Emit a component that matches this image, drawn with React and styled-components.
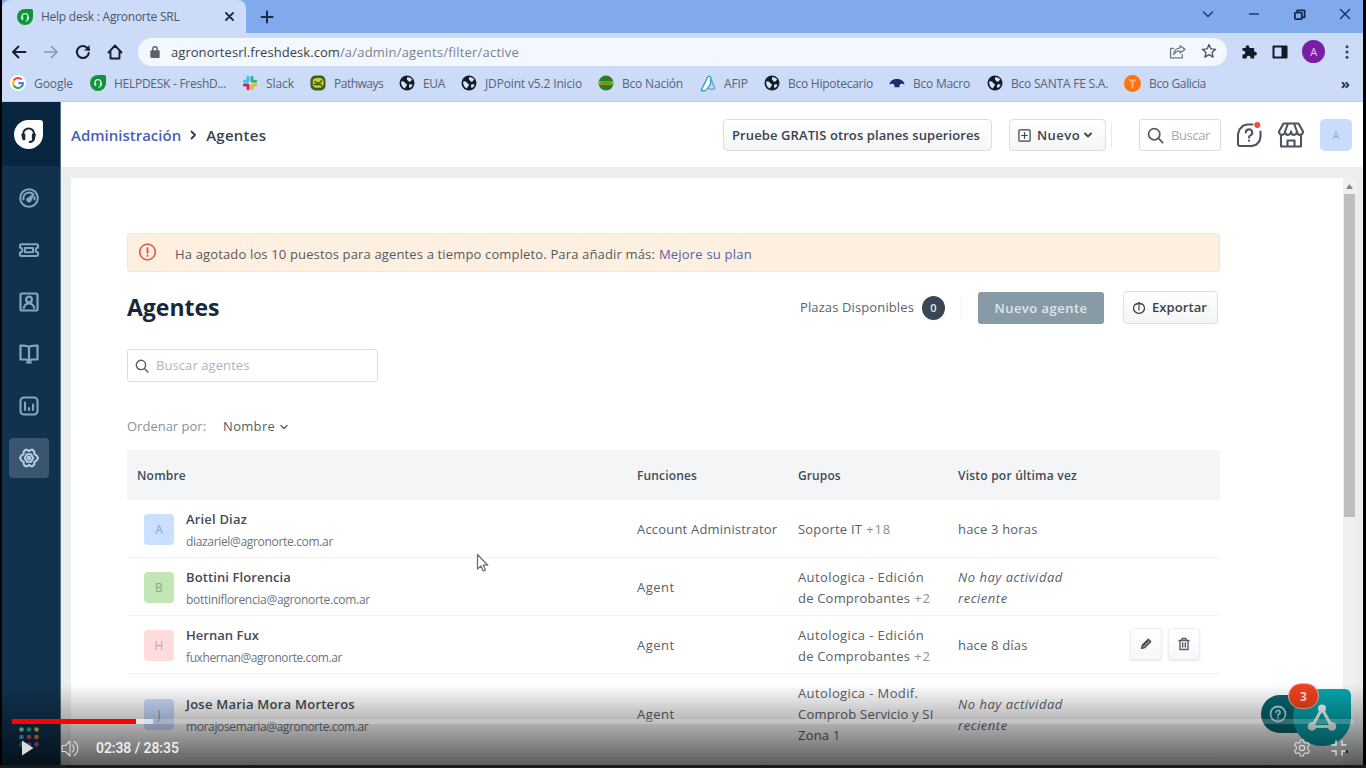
import React from 'react';
import styled, { createGlobalStyle } from 'styled-components';

const GlobalStyle = createGlobalStyle`
  * { box-sizing: border-box; }
  body { margin: 0; background: #000; overflow: hidden; }
  svg { display: block; flex: none; }
`;

const Frame = styled.div`
  position: relative;
  width: 1366px;
  height: 768px;
  padding: 0 3px 3px 2px;
  background: #000;
  overflow: hidden;
  font-family: 'Open Sans', 'Noto Sans', sans-serif;
  color: #3b444d;
`;

const Screen = styled.div`
  display: flex;
  flex-direction: column;
  height: 765px;
  overflow: hidden;
  background: #fff;
`;

const Text = styled.span`
  white-space: nowrap;
  font-size: ${(p) => p.$size || 13}px;
  font-weight: ${(p) => p.$weight || 400};
  font-style: ${(p) => (p.$italic ? 'italic' : 'normal')};
  letter-spacing: ${(p) => p.$ls || 0}px;
  color: ${(p) => p.$color || 'inherit'};
  line-height: ${(p) => p.$lh || 21}px;
`;

/* Browser chrome */
const TabStrip = styled.div`
  display: flex;
  height: 33px;
  background: #80a9ee;
`;
const Tab = styled.div`
  display: flex;
  align-items: center;
  width: 244px;
  padding: 0 12px 0 15px;
  border-radius: 8px 8px 0 0;
  background: #ccdbf7;
`;
const TabLabel = styled(Text)`
  flex: 1;
  margin-left: 8px;
`;
const NewTab = styled.div`
  display: flex;
  align-items: center;
  margin-left: 14px;
  flex: 1;
`;
const WindowButtons = styled.div`
  display: flex;
  align-items: center;
  gap: 33px;
  height: 28px;
  padding-right: 12px;
`;
const Toolbar = styled.div`
  display: flex;
  align-items: center;
  height: 37px;
  padding: 0 9px 0 9px;
  background: #ccdbf7;
`;
const NavIcons = styled.div`
  display: flex;
  gap: 16px;
  width: 127px;
`;
const AddressBar = styled.div`
  display: flex;
  align-items: center;
  width: 1089px;
  height: 28px;
  padding: 0 10px 0 12px;
  border-radius: 14px;
  background: #f3f7fe;
`;
const Url = styled.div`
  flex: 1;
  margin: 1px 0 0 11px;
  display: flex;
`;
const AddressActions = styled.div`
  display: flex;
  gap: 15px;
`;
const ToolbarActions = styled.div`
  display: flex;
  align-items: center;
  flex: 1;
  justify-content: space-between;
  margin-left: 14px;
`;
const Profile = styled.div`
  display: grid;
  place-items: center;
  width: 23px;
  height: 23px;
  border-radius: 50%;
  background: #7b1fa2;
`;
const Bookmarks = styled.div`
  display: flex;
  align-items: center;
  height: 32px;
  padding: 0 13px 5px 8px;
  background: #ccdbf7;
  border-bottom: 1px solid #b9cbe9;
`;
const Bookmark = styled.div`
  display: flex;
  align-items: center;
  gap: 8px;
  flex: none;
  width: ${(p) => p.$w}px;
`;
const MoreBookmarks = styled(Text)`
  margin-left: auto;
`;

/* Helpdesk application */
const AppBody = styled.div`
  display: flex;
  flex: 1;
  min-height: 0;
`;
const Sidebar = styled.nav`
  display: flex;
  flex-direction: column;
  flex: none;
  width: 59px;
  background: #10324f;
  border-right: 1px solid #5b7186;
`;
const Brand = styled.div`
  display: flex;
  align-items: center;
  height: 64px;
  padding-left: 12px;
  background: #08263f;
`;
const SideItem = styled.div`
  display: grid;
  place-items: center;
  width: 40px;
  height: 40px;
  margin: 12px 0 0 7px;
  padding-right: 1px;
  border-radius: 4px;
  color: ${(p) => (p.$active ? '#bcd0e4' : '#86a5c1')};
  background: ${(p) => (p.$active ? '#3a5570' : 'transparent')};
`;
const AppsGrid = styled.div`
  margin: auto 0 18px 17px;
`;
const Main = styled.div`
  display: flex;
  flex-direction: column;
  flex: 1;
  min-width: 0;
`;
const PageHeader = styled.header`
  display: flex;
  align-items: center;
  height: 65px;
  padding: 1px 11px 0 10px;
  background: #fff;
`;
const Breadcrumb = styled.div`
  display: flex;
  align-items: center;
  flex: 1;
`;
const Chevron = styled.div`
  width: 25px;
  display: grid;
  place-items: center;
`;
const Button = styled.div`
  display: flex;
  align-items: center;
  flex: none;
  height: ${(p) => p.$h}px;
  width: ${(p) => p.$w}px;
  margin-left: ${(p) => p.$ml || 0}px;
  padding: 0 8px;
  border: 1px solid #dcdee1;
  border-radius: 4px;
  background: linear-gradient(#fff, #f4f5f6);
  color: #39434c;
`;
const ButtonLabel = styled(Text)`
  margin: 0 4px 0 6px;
`;
const Divider = styled.div`
  width: 1px;
  height: 26px;
  margin: 0 ${(p) => p.$mr}px 0 ${(p) => p.$ml}px;
  background: ${(p) => p.$color || '#e6e8ea'};
`;
const SearchBox = styled.div`
  display: flex;
  align-items: center;
  gap: 7px;
  width: ${(p) => p.$w}px;
  height: ${(p) => p.$h}px;
  padding: 0 7px;
  border: 1px solid #dcdde3;
  border-radius: 3px;
  background: #fff;
`;
const HeaderIcons = styled.div`
  display: flex;
  align-items: center;
  gap: 16px;
  margin-left: 15px;
`;
const UserBadge = styled.div`
  display: grid;
  place-items: center;
  width: 32px;
  height: 32px;
  border-radius: 5px;
  background: #c9dcfd;
`;
const Workspace = styled.div`
  display: flex;
  flex: 1;
  min-height: 0;
  padding: 11px 6px 0 10px;
  background: #eceeee;
`;
const Card = styled.section`
  width: 1272px;
  flex: none;
  padding: 55px 123px 0 56px;
  background: #fff;
`;
const Scrollbar = styled.div`
  display: flex;
  flex-direction: column;
  align-items: center;
  width: 13px;
  padding-top: 6px;
  background: #eef0f1;
`;
const ScrollThumb = styled.div`
  width: 11px;
  height: 323px;
  margin-top: 5px;
  background: #bdbec0;
`;
const Alert = styled.div`
  display: flex;
  align-items: center;
  height: 39px;
  padding: 0 10px;
  border: 1px solid #fbe3cc;
  border-radius: 3px;
  background: #fef0e1;
`;
const AlertText = styled.div`
  display: flex;
  gap: 4px;
  margin: 3px 0 0 18px;
`;
const TitleRow = styled.div`
  display: flex;
  align-items: center;
  margin-top: 19px;
  height: 33px;
  padding-right: 2px;
`;
const Title = styled.h1`
  flex: 1;
  margin: -2px 0 0;
  font-size: 23px;
  line-height: 32px;
  font-weight: 700;
  letter-spacing: -0.02px;
  color: #17293a;
`;
const Count = styled.div`
  display: grid;
  place-items: center;
  width: 23px;
  height: 24px;
  margin-left: 8px;
  border-radius: 50%;
  background: #394654;
`;
const PrimaryButton = styled.div`
  display: grid;
  place-items: center;
  width: 126px;
  height: 32px;
  margin-right: 19px;
  padding-top: 2px;
  border-radius: 3px;
  background: #899aa7;
`;
const SearchRow = styled.div`
  margin-top: 25px;
`;
const SortRow = styled.div`
  display: flex;
  align-items: center;
  height: 21px;
  margin: 34px 0 13px;
`;
const SortValue = styled.div`
  display: flex;
  align-items: center;
  gap: 5px;
  margin-left: 17px;
`;
const columns = '500px 161px 160px 172px 1fr';
const TableHead = styled.div`
  display: grid;
  grid-template-columns: ${columns};
  align-items: center;
  height: 50px;
  padding-left: 10px;
  background: #f4f5f7;
  color: #424b55;
`;
const TableRow = styled.div`
  display: grid;
  grid-template-columns: ${columns};
  align-items: center;
  height: ${(p) => p.$h}px;
  padding: 2px 0 0 10px;
  border-bottom: 1px solid #f1f3f4;
`;
const AgentCell = styled.div`
  display: flex;
  align-items: center;
  gap: 12px;
  padding-left: 7px;
`;
const Avatar = styled.div`
  display: grid;
  place-items: center;
  width: 30px;
  height: 31px;
  border-radius: 4px;
  background: ${(p) => p.$bg};
  color: ${(p) => p.$fg};
`;
const Stack = styled.div`
  display: flex;
  flex-direction: column;
`;
const Email = styled(Text)`
  padding-top: 1px;
  margin-bottom: -1px;
`;
const RowActions = styled.div`
  display: flex;
  gap: 6px;
  margin-top: -3px;
`;
const ActionButton = styled.div`
  display: grid;
  place-items: center;
  width: 32px;
  height: 32px;
  border: 1px solid #eceef1;
  border-radius: 3px;
  background: linear-gradient(#fff, #f6f7f8);
  box-shadow: 0 1px 2px rgba(30, 40, 60, 0.12);
`;

/* Floating widgets and player */
const Pointer = styled.div`
  position: absolute;
  left: 476px;
  top: 553px;
`;
const HelpPill = styled.div`
  position: absolute;
  left: 1261px;
  top: 695px;
  width: 56px;
  height: 38px;
  padding: 10px 0 0 8px;
  border-radius: 19px;
  background: #04666d;
`;
const ChatBubble = styled.div`
  position: absolute;
  left: 1293px;
  top: 689px;
  display: grid;
  place-items: center;
  width: 58px;
  height: 57px;
  border-radius: 29px 6px 29px 29px;
  background: #05a5ad;
`;
const Unread = styled.div`
  position: absolute;
  left: 1288px;
  top: 683px;
  display: grid;
  place-items: center;
  width: 31px;
  height: 26px;
  border: 1px solid #ffb59f;
  border-radius: 13px;
  background: #f0431f;
`;
const Player = styled.div`
  position: absolute;
  left: 0;
  right: 0;
  bottom: 0;
  height: 84px;
  padding: 35px 12px 0;
  background: linear-gradient(transparent, rgba(0, 0, 0, 0.64) 81px, rgba(28, 28, 28, 1) 81px);
`;
const Track = styled.div`
  display: flex;
  height: 5px;
  background: rgba(255, 255, 255, 0.2);
`;
const Played = styled.div`
  width: 124px;
  background: #f00;
`;
const Loaded = styled.div`
  width: 17px;
  background: rgba(255, 255, 255, 0.6);
`;
const Controls = styled.div`
  display: flex;
  align-items: center;
  height: 24px;
  margin-top: 12px;
  padding: 0 6px 0 9px;
`;
const PlayControls = styled.div`
  display: flex;
  align-items: center;
  gap: 27px;
`;
const ViewControls = styled.div`
  display: flex;
  align-items: center;
  gap: 19px;
`;
const Time = styled.div`
  flex: 1;
  margin: -1px 0 0 16px;
  font: 500 14px/20px Roboto, sans-serif;
  letter-spacing: -0.05px;
  color: #f1f1f1;
`;

const Svg = ({ w = 16, h = w, vb = '0 0 16 16', sw = 1.5, children, fill = 'none', stroke = 'currentColor' }) => (
  <svg width={w} height={h} viewBox={vb} fill={fill} stroke={stroke} strokeWidth={sw} strokeLinecap="round" strokeLinejoin="round">
    {children}
  </svg>
);

const FreshIcon = ({ size = 16, bg = '#12933a', fg = '#d9f3df' }) => (
  <Svg w={size} vb="0 0 28 28" stroke={fg} sw={1.900}>
    <path d="M14 0H25a3 3 0 0 1 3 3V14A14 14 0 1 1 14 0Z" fill={bg} stroke="none" />
    <path d="M8.800 15v-1.600a5.300 5.300 0 0 1 10.600 0V15M19.300 18c-.5 2-2 3-4 3.300" />
    <path d="M8 14h2v4.500H9zM20.200 14h-2v4.500h1z" fill={fg} />
  </Svg>
);
const GlobeIcon = () => (
  <Svg stroke="none">
    <circle cx="8" cy="8" r="7.500" fill="#131c28" />
    <path d="M2.300 6.500c1.500-.8 3.200.2 3.800 1.500.5 1 2 .5 1.800 2-.2 1.200-1.300 1-1.500 2.500l-.4 1C3.500 12.500 1.800 9.500 2.300 6.500ZM8 2.500c2.200-.6 4.300.6 5.200 2.300-1.200.5-1.500 2-2.800 1.900C9 6.600 9.200 5.200 8 4.800ZM10.500 9.500c1.200-.6 2.200-.2 3.200.3-.6 1.600-1.700 2.700-3 3.200-.8-1-1-2.600-.2-3.500Z" fill="#d7e3f6" />
  </Svg>
);
const GoogleIcon = () => (
  <Svg sw={2.200}>
    <circle cx="8" cy="8" r="8" fill="#fff" stroke="none" />
    <g strokeLinecap="butt">
      <path d="M11.700 4.600A5 5 0 0 0 3.700 5.500" stroke="#ea4335" />
      <path d="M3.700 5.500a5 5 0 0 0 0 5" stroke="#fbbc05" />
      <path d="M3.700 10.500a5 5 0 0 0 7.500 1.400" stroke="#34a853" />
      <path d="M11.200 11.900A5 5 0 0 0 13 8.200H8.300" stroke="#4285f4" />
    </g>
  </Svg>
);
const SlackIcon = () => (
  <Svg sw={3}>
    <path d="M6 2.200V6M2.300 6.200H5" stroke="#36c5f0" />
    <path d="M10 2.300V6M13.700 6.300H11" stroke="#2eb67d" />
    <path d="M6 10v3.700M2.300 10H5" stroke="#e01e5a" />
    <path d="M10 10.500v3.200M13.700 10H11" stroke="#ecb22e" />
  </Svg>
);
const PathwaysIcon = () => (
  <Svg sw={1.400}>
    <rect x=".5" y=".5" width="15" height="15" rx="5" fill="#31601f" stroke="none" />
    <path d="M3 4.500 6 3h5l2.500 2v5L11 12.800H5L2.700 10.500Z" fill="#d9c526" stroke="none" />
    <path d="M4 9.500h6.500L12 11M5 6.500l2 1.500 3.500-.5 1-2" stroke="#31601f" />
  </Svg>
);
const NacionIcon = () => (
  <Svg stroke="none">
    <circle cx="8" cy="8" r="7.500" fill="#2b7a25" />
    <path d="M.5 6.300h15v3.400H.5z" fill="#a3b32b" />
    <path d="M3 8h10" stroke="#2b7a25" strokeWidth="1.200" />
  </Svg>
);
const AfipIcon = () => (
  <Svg w={17} h={17} sw={1.300}>
    <path d="M2 14.500 8 2.300c.8-1.400 2.800-1.300 3.300.3l-.6 6.200-3 4.200c-1.200 1.700-3.700 2.400-5.700 1.500Z" fill="#fff" stroke="#3d9bd0" />
    <path d="m11.300 4 3.500 8.500c-1.400 1.200-3.700 1.300-5.500.2" stroke="#5aa9d4" />
  </Svg>
);
const MacroIcon = () => (
  <Svg stroke="none">
    <path d="M.5 9.500C1 5.500 4.500 4 8 4s7 1.500 7.500 5.500l-3-1L10.500 10v2.200h-5V10l-2-1.500Z" fill="#1e2b66" />
  </Svg>
);
const GaliciaIcon = () => (
  <Svg w={17} stroke="#ffb877" sw={1.700}>
    <circle cx="8" cy="8" r="8" fill="#f97412" stroke="none" />
    <path d="M8 4.500v7.500M5.500 4.500c.5 1.200 1.500 1.500 2.500 1.500s2-.3 2.500-1.500" />
  </Svg>
);
const SearchIcon = ({ size = 16 }) => (
  <Svg w={size} sw={1.600} stroke="#505b66">
    <circle cx="6.800" cy="6.800" r="5.300" />
    <path d="m10.800 10.800 4 4" />
  </Svg>
);
const CaretDown = ({ w = 8, sw = 1.800, color = '#3b444d' }) => (
  <Svg w={w} h={6} vb="0 0 8 6" sw={sw} stroke={color}>
    <path d="m1 1.500 3 3 3-3" />
  </Svg>
);

const bookmarks = [
  ['Google', 80, -0.07, <GoogleIcon />],
  ['HELPDESK - FreshD...', 152, -0.27, <FreshIcon />],
  ['Slack', 68, -0.07, <SlackIcon />],
  ['Pathways', 89, -0.5, <PathwaysIcon />],
  ['EUA', 62, -0.33, <GlobeIcon />],
  ['JDPoint v5.2 Inicio', 137, -0.15, <GlobeIcon />],
  ['Bco Nación', 101, -0.19, <NacionIcon />],
  ['AFIP', 65, -0.09, <AfipIcon />],
  ['Bco Hipotecario', 125, -0.26, <GlobeIcon />],
  ['Bco Macro', 98, -0.24, <MacroIcon />],
  ['Bco SANTA FE S.A.', 137, -0.22, <GlobeIcon />],
  ['Bco Galicia', 90, -0.35, <GaliciaIcon />],
];

const sideIcons = [
  <Svg w={20} vb="0 0 20 20" sw={2}>
    <circle cx="10" cy="10" r="8.800" />
    <path d="M4.500 11.500A5.700 5.700 0 0 1 10 4.500c2 0 3.500.8 4.500 2M15.500 9v2.500" />
    <path d="m14 7-2.500 5.500c-1 1.800-3.800.8-3.300-1.200Z" fill="currentColor" />
  </Svg>,
  <Svg w={20} vb="0 0 20 20" sw={2}>
    <path d="M2.500 4.200h15a1.500 1.500 0 0 1 1.500 1.500v2a2.400 2.400 0 0 0 0 4.800v2a1.500 1.500 0 0 1-1.500 1.500h-15A1.500 1.500 0 0 1 1 14.500v-2a2.400 2.400 0 0 0 0-4.800v-2A1.500 1.500 0 0 1 2.500 4.200Z" />
    <rect x="6" y="8" width="8" height="4.200" />
  </Svg>,
  <Svg w={20} vb="0 0 20 20" sw={2.200}>
    <rect x="1.500" y="1.500" width="17" height="17" rx="1.500" />
    <circle cx="10" cy="7.500" r="2.900" />
    <path d="M4.800 16c.7-3 2.500-4.500 5.200-4.500s4.500 1.500 5.200 4.500" />
  </Svg>,
  <Svg w={20} vb="0 0 20 20" sw={2.200}>
    <path d="M10 3C8.500 1.800 5 1.500 1.500 1.700V15.500H7.500L10 17l2.500-1.500H18.500V1.700C15 1.500 11.500 1.800 10 3ZM10 3V16" />
    <path d="M8 18.500h4" />
  </Svg>,
  <Svg w={20} vb="0 0 20 20" sw={2.100}>
    <rect x="1.500" y="1.500" width="17" height="17" rx="3.500" />
    <path d="M6 6.500v7.500M10 12V14M14 8.500V14" />
  </Svg>,
  <Svg w={20} vb="0 0 20 20" sw={2}>
    <path d="M6.200 1.800h2L10 3.300l1.800-1.500h2L15.500 4.200l-.2 2L17.500 7.300 19 10l-1.500 2.700-2.200 1.100.2 2-1.700 2.400h-2L10 16.700l-1.800 1.500h-2l-1.700-2.400.2-2-2.200-1.100L1 10l1.500-2.700 2.200-1.100-.2-2Z" />
    <path d="M8 6.200h4l2.200 3.800-2.200 3.800H8L5.800 10Z" />
    <circle cx="10" cy="10" r="1.200" />
  </Svg>,
];

const agents = [
  { h: 58, letter: 'A', bg: '#cbdffe', fg: '#8ba6cf', name: 'Ariel Diaz', nls: 0.18, mail: 'diazariel@agronorte.com.ar', mls: -0.33, role: 'Account Administrator', rls: 0.19, groups: ['Soporte IT'], more: '+18', seen: ['hace 3 horas'] },
  { h: 58, letter: 'B', bg: '#c3e6b7', fg: '#86ab7e', name: 'Bottini Florencia', nls: 0.11, mail: 'bottiniflorencia@agronorte.com.ar', mls: -0.3, role: 'Agent', rls: 0.5, groups: ['Autologica - Edición', 'de Comprobantes'], more: '+2', seen: ['No hay actividad', 'reciente'], never: true },
  { h: 58, letter: 'H', bg: '#ffdcdc', fg: '#cf9c9f', name: 'Hernan Fux', nls: 0.04, mail: 'fuxhernan@agronorte.com.ar', mls: -0.41, role: 'Agent', rls: 0.5, groups: ['Autologica - Edición', 'de Comprobantes'], more: '+2', seen: ['hace 8 días'], actions: true },
  { h: 80, letter: 'J', bg: '#cbdcfe', fg: '#839cc9', name: 'Jose Maria Mora Morteros', nls: 0.24, mail: 'morajosemaria@agronorte.com.ar', mls: -0.37, role: 'Agent', rls: 0.5, groups: ['Autologica - Modif.', 'Comprob Servicio y SI', 'Zona 1'], seen: ['No hay actividad', 'reciente'], never: true },
];

const dots = ['#7fe3dc', '#2fbf8a', '#f5c04a', '#5aa7e8', '#e05a6a', '#ef8a4c', '#4a7fd8', '#8c5fd0', '#c060c8'];

const Browser = () => (
  <>
    <TabStrip>
      <Tab>
        <FreshIcon size={16} />
        <TabLabel $size={12} $ls={-0.25} $color="#4a5566">Help desk : Agronorte SRL</TabLabel>
        <Svg w={9} vb="0 0 9 9" sw={1.800} stroke="#222c3a"><path d="m1 1 7 7M8 1 1 8" /></Svg>
      </Tab>
      <NewTab>
        <Svg w={14} vb="0 0 14 14" sw={2} stroke="#1d2c47"><path d="M7 1.500v11M1.500 7h11" /></Svg>
      </NewTab>
      <WindowButtons>
        <Svg w={14} vb="0 0 14 14" sw={1.400} stroke="#253a63"><path d="m2.500 5 4.500 4.500L11.500 5" /></Svg>
        <Svg w={12} vb="0 0 12 12" sw={1.400} stroke="#253a63"><path d="M1.500 6h9" /></Svg>
        <Svg w={13} vb="0 0 14 14" sw={1.900} stroke="#16264a"><rect x="2" y="5" width="7.500" height="7" rx="1" /><path d="M4.500 4.500V2.500h8v7.500H10" /></Svg>
        <Svg w={12} vb="0 0 12 12" sw={1.400} stroke="#1d2f55"><path d="m1.500 1.500 9 9M10.500 1.500l-9 9" /></Svg>
      </WindowButtons>
    </TabStrip>
    <Toolbar>
      <NavIcons>
        <Svg stroke="#16202f" sw={1.900}><path d="M14.500 8H2M7.500 2.500 2 8l5.500 5.500" /></Svg>
        <Svg stroke="#8595b0" sw={1.600}><path d="M1.500 8H14M8.500 2.500 14 8l-5.500 5.500" /></Svg>
        <Svg stroke="#16202f" sw={2.100}><path d="M13.800 9A6 6 0 1 1 12.500 4.200L14 5.800" /><path d="M14.300 1.800v4.500H9.800Z" fill="#16202f" strokeWidth="0.5" /></Svg>
        <Svg stroke="#16202f" sw={1.900}><path d="M1.500 8.500 8 1.500l6.500 7M3.500 7.500v7h9v-7" /></Svg>
      </NavIcons>
      <AddressBar>
        <Svg w={10} h={12} vb="0 0 10 12" sw={1.400} stroke="#5a616b">
          <rect x="1" y="5" width="8" height="6.300" rx=".6" fill="#5a616b" />
          <path d="M2.800 5V3a2.200 2.200 0 0 1 4.400 0v2" />
        </Svg>
        <Url>
          <Text $ls={0.05} $color="#3a424b">agronortesrl.freshdesk.com</Text>
          <Text $ls={0.2} $color="#7b828d">/a/admin/agents/filter/active</Text>
        </Url>
        <AddressActions>
          <Svg w={17} sw={1.200} stroke="#6f7885">
            <path d="M4.500 5H1.500v9h11v-3" />
            <path d="M10.500 2.500 15 6l-4.500 3.500V7.500C7.500 7.500 6 8.500 4.500 11c.3-4 2.500-6.200 6-6.500Z" />
          </Svg>
          <Svg sw={1.300} stroke="#4a525e"><path d="m8 1.500 1.900 4.400 4.700.4-3.600 3.100 1.100 4.700L8 11.600l-4.100 2.500L5 9.400 1.400 6.300l4.700-.4Z" /></Svg>
        </AddressActions>
      </AddressBar>
      <ToolbarActions>
        <Svg stroke="none" fill="#111a28"><path d="M6.500 1.200a1.900 1.900 0 0 1 1.900 1.900V4h3.800c.6 0 1 .4 1 1v2.800h.8a1.900 1.900 0 0 1 0 3.800h-.8v2.900H9.600v-.8a2 2 0 0 0-4 0v.8H1.500v-4h.9a1.900 1.900 0 0 0 0-3.800h-.9V4h3.100v-.9a1.900 1.900 0 0 1 1.900-1.900Z" /></Svg>
        <Svg stroke="#111a28" sw={2}><path d="M1.500 2.500h13v11h-13Z" /><path d="M10.500 3h3.500v10h-3.500Z" fill="#111a28" /></Svg>
        <Profile><Text $size={11} $lh={14} $color="#e6c8f2">A</Text></Profile>
        <Svg w={14} vb="0 0 14 14" stroke="none" fill="#3a4454"><circle cx="7" cy="1.800" r="1.500" /><circle cx="7" cy="7" r="1.500" /><circle cx="7" cy="12.200" r="1.500" /></Svg>
      </ToolbarActions>
    </Toolbar>
    <Bookmarks>
      {bookmarks.map(([label, w, ls, icon]) => (
        <Bookmark key={label} $w={w}>
          {icon}
          <Text $size={12} $ls={ls} $color="#566378">{label}</Text>
        </Bookmark>
      ))}
      <MoreBookmarks $size={15} $weight={700} $color="#26334a">»</MoreBookmarks>
    </Bookmarks>
  </>
);

export default function App() {
  return (
    <Frame>
      <GlobalStyle />
      <Screen>
        <Browser />
        <AppBody>
          <Sidebar>
            <Brand><FreshIcon size={29} bg="#fff" fg="#15293b" /></Brand>
            {sideIcons.map((icon, i) => (
              <SideItem key={i} $active={i === 5}>{icon}</SideItem>
            ))}
            <AppsGrid>
              <Svg w={20} vb="0 0 20 20" stroke="none">
                {dots.map((c, i) => (
                  <circle key={c} cx={2.500 + (i % 3) * 7.500} cy={2.500 + Math.floor(i / 3) * 7.500} r="2.300" fill={c} />
                ))}
              </Svg>
            </AppsGrid>
          </Sidebar>
          <Main>
            <PageHeader>
              <Breadcrumb>
                <Text $size={15} $weight={600} $color="#4a5fb5">Administración</Text>
                <Chevron><Svg w={7} h={10} vb="0 0 7 10" sw={1.800} stroke="#333c45"><path d="m1.500 1.500 3.500 3.500-3.500 3.500" /></Svg></Chevron>
                <Text $size={15} $weight={600} $ls={0.25} $color="#3a434c">Agentes</Text>
              </Breadcrumb>
              <Button $w={269} $h={32}><Text $weight={600} $ls={0.1}>Pruebe GRATIS otros planes superiores</Text></Button>
              <Button $w={97} $h={32} $ml={17}>
                <Svg w={13} vb="0 0 14 14" sw={1.300}><rect x="1" y="1" width="12" height="12" rx="1" /><path d="M7 4v6M4 7h6" /></Svg>
                <ButtonLabel $weight={600} $ls={0.44}>Nuevo</ButtonLabel>
                <CaretDown />
              </Button>
              <Divider $ml={5} $mr={27} />
              <SearchBox $w={82} $h={32}>
                <SearchIcon size={17} />
                <Text $ls={-0.39} $color="#a3a9b3">Buscar</Text>
              </SearchBox>
              <HeaderIcons>
                <Svg w={26} vb="0 0 26 26" sw={2.100} stroke="#4d555f">
                  <path d="M16.500 2.500H11l-4 1.300L3.500 7.500 2 12v10a2 2 0 0 0 2 2h12l4.500-1.500L23.500 19l1-4V9.500" />
                  <path d="M9.800 10.500a3.200 3.200 0 1 1 4.600 2.900c-1 .5-1.400 1-1.400 2.100M13 18.500v.2" />
                  <circle cx="21.300" cy="3" r="3" fill="#f04a3c" stroke="none" />
                </Svg>
                <Svg w={26} vb="0 0 26 26" sw={2.100} stroke="#4d555f">
                  <path d="M5.500 1.500h15L25 9.500c0 4.500-6 4.500-6 0 0 4.500-6 4.500-6 0 0 4.500-6 4.500-6 0 0 4.500-6 4.500-6 0ZM10 1.500l-3 8M16 1.500l3 8M3 13.500v11h20v-11M9.500 24.500V18.500h7v6" />
                </Svg>
                <UserBadge><Text $size={10} $lh={12} $color="#90abd8">A</Text></UserBadge>
              </HeaderIcons>
            </PageHeader>
            <Workspace>
              <Card>
                <Alert>
                  <Svg w={19} vb="0 0 19 19" sw={1.700} stroke="#e2604e"><circle cx="9.500" cy="9" r="7.800" /><path d="M9.500 5v4.700M9.500 12.500v.2" strokeWidth="2" /></Svg>
                  <AlertText>
                    <Text $ls={0.15} $color="#55595e">Ha agotado los 10 puestos para agentes a tiempo completo. Para añadir más:</Text>
                    <Text $ls={0.2} $color="#5361a8">Mejore su plan</Text>
                  </AlertText>
                </Alert>
                <TitleRow>
                  <Title>Agentes</Title>
                  <Text $ls={0.12} $color="#5b646d">Plazas Disponibles</Text>
                  <Count><Text $size={11} $lh={14} $weight={600} $color="#e8edf2">0</Text></Count>
                  <Divider $ml={16} $mr={16} $color="#f1f3f4" />
                  <PrimaryButton><Text $weight={600} $ls={0.47} $color="#dfe5ea">Nuevo agente</Text></PrimaryButton>
                  <Button $w={95} $h={33}>
                    <Svg w={14} vb="0 0 14 14" sw={1.200}><path d="M4.500 2.600a5.500 5.200 0 1 0 5 0M7 9V1.500M5 3.300l2-2 2 2" /></Svg>
                    <ButtonLabel $weight={600} $ls={0.08}>Exportar</ButtonLabel>
                  </Button>
                </TitleRow>
                <SearchRow>
                  <SearchBox $w={251} $h={33}>
                    <SearchIcon size={14} />
                    <Text $ls={0.08} $color="#b0b5bb">Buscar agentes</Text>
                  </SearchBox>
                </SearchRow>
                <SortRow>
                  <Text $color="#8b929a">Ordenar por:</Text>
                  <SortValue>
                    <Text $ls={0.3} $color="#555d66">Nombre</Text>
                    <CaretDown sw={1.500} color="#5c646d" />
                  </SortValue>
                </SortRow>
                <TableHead>
                  <Text $size={12} $weight={600} $ls={0.21}>Nombre</Text>
                  <Text $size={12} $weight={600} $ls={0.15}>Funciones</Text>
                  <Text $size={12} $weight={600} $ls={0.1}>Grupos</Text>
                  <Text $size={12} $weight={600} $ls={0.22}>Visto por última vez</Text>
                </TableHead>
                {agents.map((a) => (
                  <TableRow key={a.name} $h={a.h}>
                    <AgentCell>
                      <Avatar $bg={a.bg} $fg={a.fg}><Text $size={12} $lh={16}>{a.letter}</Text></Avatar>
                      <Stack>
                        <Text $weight={600} $ls={a.nls} $color="#434c55">{a.name}</Text>
                        <Email $size={12} $ls={a.mls} $color="#6c747d">{a.mail}</Email>
                      </Stack>
                    </AgentCell>
                    <Text $ls={a.rls} $color="#59616a">{a.role}</Text>
                    <Stack>
                      {a.groups.map((g, i) => (
                        <Text key={g} $ls={g.startsWith('Auto') ? 0.39 : 0.2} $color="#59616a">
                          {g}
                          {a.more && i === a.groups.length - 1 && <Text $ls={0.8} $color="#8a9199"> {a.more}</Text>}
                        </Text>
                      ))}
                    </Stack>
                    <Stack>
                      {a.seen.map((s) => (
                        <Text key={s} $italic={a.never} $ls={a.never ? 0.52 : 0.18} $color="#59616a">{s}</Text>
                      ))}
                    </Stack>
                    {a.actions && (
                      <RowActions>
                        <ActionButton>
                          <Svg w={14} vb="0 0 14 14" sw={1.200} stroke="#3f474f"><path d="m2.500 11.500.8-3.300 6-6 2.500 2.500-6 6Z" fill="#8a9097" /><path d="m4 8.500 5-5" /></Svg>
                        </ActionButton>
                        <ActionButton>
                          <Svg w={14} vb="0 0 14 14" sw={1.400} stroke="#555d65"><path d="M2 3.500h10M5 3.300V1.500h4v1.800M3 3.500V12.500h8V3.500M5.700 6v4M8.300 6v4" /></Svg>
                        </ActionButton>
                      </RowActions>
                    )}
                  </TableRow>
                ))}
              </Card>
              <Scrollbar>
                <Svg w={7} h={5} vb="0 0 7 5" stroke="none" fill="#85898e"><path d="M3.500 0 7 5H0Z" /></Svg>
                <ScrollThumb />
              </Scrollbar>
            </Workspace>
          </Main>
        </AppBody>
      </Screen>
      <Pointer>
        <Svg w={13} h={20} vb="0 0 13 20" sw={1.300} stroke="#6d7176"><path d="M1.500 1.500V16l3.500-3 2.200 5 2.300-1-2.200-4.800h4.500Z" fill="#fff" /></Svg>
      </Pointer>
      <HelpPill>
        <Svg w={18} vb="0 0 18 18" sw={1.800} stroke="#a4dbe6"><circle cx="9" cy="9" r="7.500" /><path d="M7 7.300a2 2 0 1 1 2.900 1.800c-.6.300-.9.600-.9 1.200M9 12.500v.2" /></Svg>
      </HelpPill>
      <ChatBubble>
        <Svg w={30} h={28} vb="0 0 30 28" sw={3} stroke="#f4ffff">
          <path d="M15 5 5 22.500h20Z" />
          <g fill="#f4ffff" stroke="none"><circle cx="15" cy="4.500" r="4" /><circle cx="5" cy="22.500" r="4.300" /><circle cx="25" cy="22.500" r="4.300" /></g>
        </Svg>
      </ChatBubble>
      <Unread><Text $size={12} $lh={15} $weight={700} $color="#ffe3da">3</Text></Unread>
      <Player>
        <Track><Played /><Loaded /></Track>
        <Controls>
          <PlayControls>
            <Svg w={13} h={16} vb="0 0 13 16" stroke="none" fill="#dcdcdc"><path d="M1 .5 12.500 8 1 15.500Z" /></Svg>
            <Svg w={19} h={17} vb="0 0 19 17" sw={1.100} stroke="#d8d8d8"><path d="M1 5.500h3.500L9 1v15L4.500 11.500H1ZM11.300 5a4.500 4.500 0 0 1 0 7M13 1.500c5 3 5 11 0 14" /></Svg>
          </PlayControls>
          <Time>02:38 / 28:35</Time>
          <ViewControls>
            <Svg w={18} vb="0 0 18 18" sw={1.100} stroke="#d8d8d8">
              <path d="M7.500 1h3l.5 2.300 1.700 1 2.200-.8 1.500 2.600-1.700 1.600v2.600l1.700 1.600-1.500 2.600-2.200-.8-1.700 1-.5 2.300h-3L7 14.700l-1.700-1-2.200.8-1.500-2.600 1.700-1.600V7.700L1.600 6.100l1.500-2.600 2.200.8 1.700-1Z" />
              <circle cx="9" cy="9" r="2.600" />
            </Svg>
            <Svg w={18} vb="0 0 18 18" sw={1.400} stroke="#dcdcdc">
              <path d="M1.500 6H6V1.500M16.500 6H12V1.500M1.500 12H6v4.500M16.500 12H12v4.500" strokeLinecap="butt" strokeLinejoin="miter" />
              <circle cx="17" cy="12.500" r="1.500" fill="#222" stroke="none" />
            </Svg>
          </ViewControls>
        </Controls>
      </Player>
    </Frame>
  );
}
